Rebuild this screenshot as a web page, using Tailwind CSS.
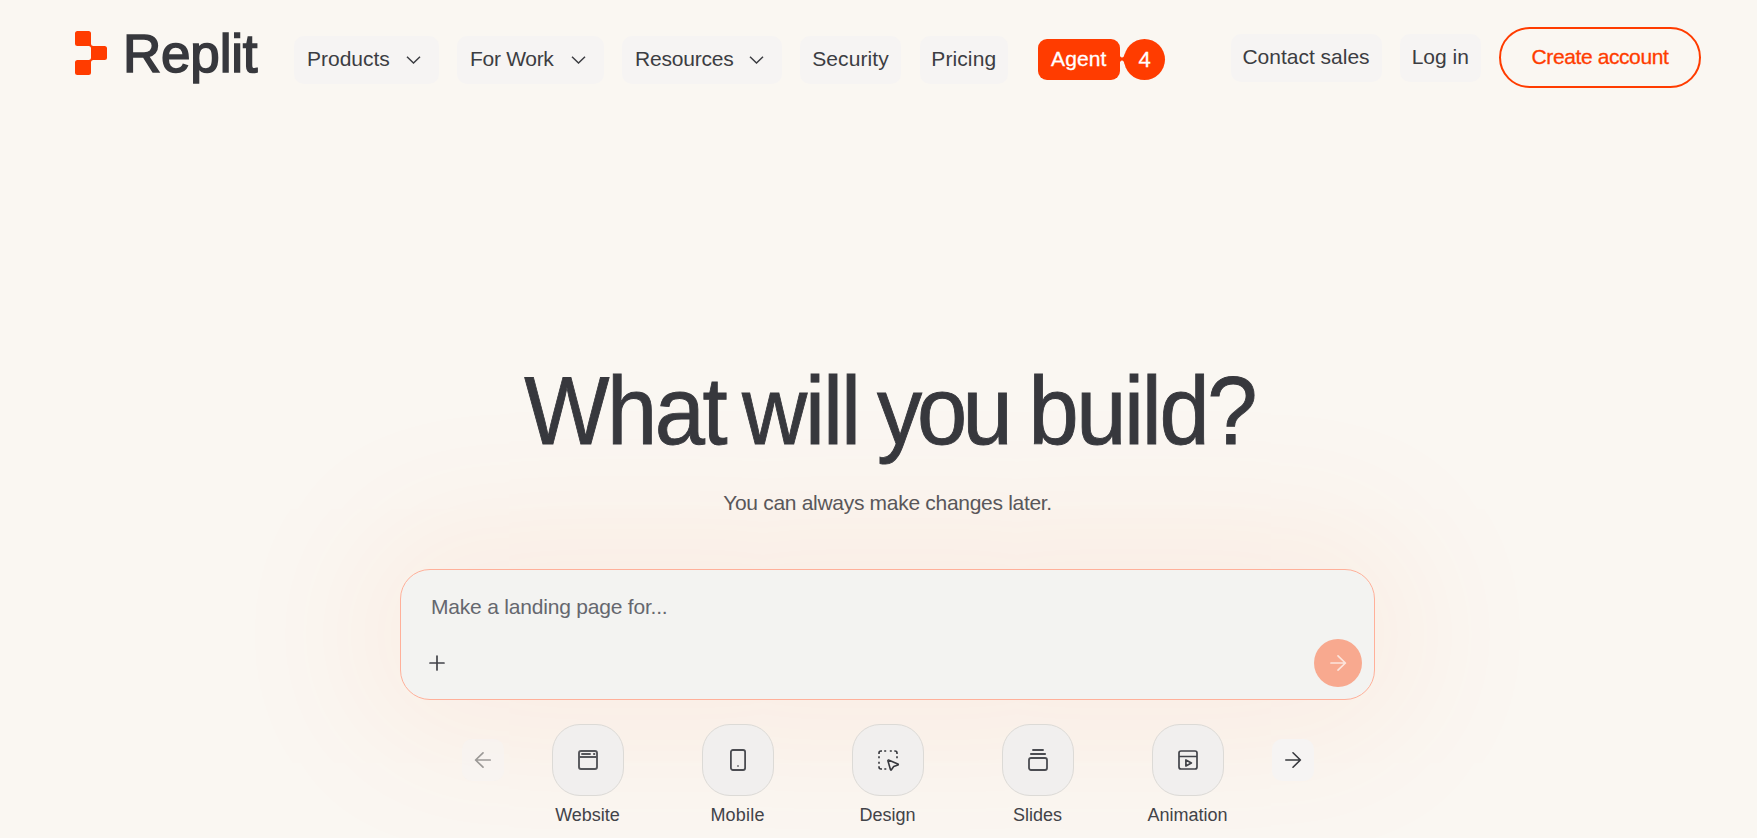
<!DOCTYPE html>
<html lang="en">
<head>
    <meta charset="UTF-8">
    <meta name="viewport" content="width=device-width, initial-scale=1.0">
    <title>Replit</title>
    <script src="https://cdn.jsdelivr.net/npm/@tailwindcss/browser@4"></script>
</head>
<body class="h-screen overflow-hidden bg-[#faf7f2] font-['Liberation_Sans',Arial,sans-serif] text-[#3c3d42]">
    <!-- Header -->
    <header class="flex h-[115px] items-start pl-[75px] pr-14 text-[21px]">
        <a href="#" class="flex w-[219px] shrink-0 items-start pt-[31px]">
            <svg class="h-11 w-8 shrink-0" viewBox="0 0 32 44" fill="#ff3c00">
                <path d="M2.5 0H13.5Q16 0 16 2.5V12.5Q16 15 18.5 15H29.5Q32 15 32 17.5V26.5Q32 29 29.5 29H18.5Q16 29 16 31.5V41.5Q16 44 13.5 44H2.5Q0 44 0 41.5V31.5Q0 29 2.5 29H13.5Q16 29 16 26.5V17.5Q16 15 13.5 15H2.5Q0 15 0 12.5V2.5Q0 0 2.5 0Z"/>
            </svg>
            <span class="-mt-[9px] ml-4 text-[53px] leading-[63px] tracking-[-0.2px] text-[#37383d] [-webkit-text-stroke:1.6px_#37383d]">Replit</span>
        </a>
        <nav class="flex gap-[18.5px] pt-9 whitespace-nowrap">
            <a href="#" class="flex h-12 w-[144.5px] items-center justify-between rounded-[10px] bg-[#f6f4f3] pr-[17.5px] pb-0.5 pl-[13px]">
                <span>Products</span>
                <svg class="mt-0.5 h-2 w-[15px]" viewBox="0 0 15 8" fill="none" stroke="currentColor" stroke-width="1.5"><path d="M1 .8l6.5 6.2L14 .8"/></svg>
            </a>
            <a href="#" class="flex h-12 w-[146.5px] items-center justify-between rounded-[10px] bg-[#f6f4f3] pr-[17.5px] pb-0.5 pl-[13px]">
                <span class="tracking-[-0.3px]">For Work</span>
                <svg class="mt-0.5 h-2 w-[15px]" viewBox="0 0 15 8" fill="none" stroke="currentColor" stroke-width="1.5"><path d="M1 .8l6.5 6.2L14 .8"/></svg>
            </a>
            <a href="#" class="flex h-12 w-[159.5px] items-center justify-between rounded-[10px] bg-[#f6f4f3] pr-[17.5px] pb-0.5 pl-[13px]">
                <span class="tracking-[-0.2px]">Resources</span>
                <svg class="mt-0.5 h-2 w-[15px]" viewBox="0 0 15 8" fill="none" stroke="currentColor" stroke-width="1.5"><path d="M1 .8l6.5 6.2L14 .8"/></svg>
            </a>
            <a href="#" class="flex h-12 w-[101px] items-center justify-center rounded-[10px] bg-[#f6f4f3] pb-0.5 tracking-[0.1px]">Security</a>
            <a href="#" class="flex h-12 w-[88.5px] items-center justify-center rounded-[10px] bg-[#f6f4f3] pb-0.5 tracking-[0.1px]">Pricing</a>
            <a href="#" class="ml-[11px] flex h-[46px] items-center text-white">
                <span class="flex h-[41px] w-[82.5px] items-center justify-center rounded-[9px] bg-[#ff3c00] tracking-[0.1px] [-webkit-text-stroke:0.3px_white]">Agent</span>
                <svg class="-mx-px h-3 w-1.5" viewBox="0 0 6 12" fill="#ff3c00"><path d="M0 0Q1 4.5 3 4.5T6 0V12Q5 7.5 3 7.5T0 12Z"/></svg>
                <span class="flex size-[41px] items-center justify-center rounded-full bg-[#ff3c00] text-[22px] [-webkit-text-stroke:0.3px_white]">4</span>
            </a>
        </nav>
        <div class="ml-auto flex items-center gap-[18px] pt-[27px] whitespace-nowrap">
            <a href="#" class="flex h-12 w-[151px] items-center justify-center rounded-[10px] bg-[#f6f4f3] pb-px">Contact sales</a>
            <a href="#" class="flex h-12 w-[81.5px] items-center justify-center rounded-[10px] bg-[#f6f4f3] pb-px">Log in</a>
            <a href="#" class="flex h-[61px] w-[202px] items-center justify-center rounded-full border-2 border-[#ff3c00] pb-0.5 tracking-[-0.4px] text-[#ff3c00] [-webkit-text-stroke:0.3px_#ff3c00]">Create account</a>
        </div>
    </header>

    <main class="flex flex-col items-center pl-[18px]">
        <!-- Hero -->
        <h1 class="mt-[240px] flex h-[112px] origin-center scale-x-94 justify-center pl-1 text-[96px] leading-[112px] whitespace-nowrap text-[#37383d] [-webkit-text-stroke:0.9px_#37383d]">
            <span class="tracking-[-2.6px]">What</span>
            <span class="ml-[18px] tracking-[-2.2px]">will</span>
            <span class="ml-[19px] tracking-[-5.2px]">you</span>
            <span class="ml-[22px] tracking-[-2.5px]">build?</span>
        </h1>
        <p class="mt-6 h-6 text-[21px] leading-6 tracking-[-0.3px] text-[#56575c]">You can always make changes later.</p>

        <!-- Prompt -->
        <div class="mt-[54px] flex h-[131px] w-[975px] flex-col justify-between rounded-[30px] border border-[#ffb09a] bg-[#f3f3f1] py-3 pr-3 pl-6 shadow-[0_0_160px_30px_rgba(255,90,20,0.08)]">
            <div class="h-9 pt-[13px] pl-1.5 text-[21px] leading-6 tracking-[-0.2px] text-[#65676e]">Make a landing page for...</div>
            <div class="flex items-center justify-between">
                <svg class="size-6" viewBox="0 0 24 24" fill="none" stroke="#424349" stroke-width="1.7" stroke-linecap="round"><path d="M12 5v14M5 12h14"/></svg>
                <button class="flex size-12 items-center justify-center rounded-full bg-[#f8a98f]">
                    <svg class="size-6" viewBox="0 0 24 24" fill="none" stroke="#fce5dd" stroke-width="1.7" stroke-linecap="round" stroke-linejoin="round"><path d="M5 12h14.4M12 4.8l7.4 7.2-7.4 7.2"/></svg>
                </button>
            </div>
        </div>

        <!-- Categories -->
        <div class="mt-6 flex items-start gap-12 text-[18px] leading-5 text-[#424348]">
            <button class="mt-[15px] flex size-[42px] items-center justify-center rounded-[10px] bg-[#f6f4f3]/50">
                <svg class="size-6" viewBox="0 0 24 24" fill="none" stroke="#9c9997" stroke-width="1.7" stroke-linecap="round" stroke-linejoin="round"><path d="M19.2 12H4.6M12 4.8L4.6 12l7.4 7.2"/></svg>
            </button>
            <div class="flex gap-[78px]">
                <div class="flex w-[72px] flex-col items-center gap-[9px]">
                    <div class="flex size-[72px] items-center justify-center rounded-[28px] border border-[#dcdad6] bg-[#f1efee]">
                        <svg class="size-6" viewBox="0 0 24 24" fill="none" stroke="#55565a" stroke-width="1.9"><rect x="3" y="3" width="18" height="18" rx="2"/><path d="M3 9h18M5.3 6h9.4M17.2 6h2"/></svg>
                    </div>
                    <span>Website</span>
                </div>
                <div class="flex w-[72px] flex-col items-center gap-[9px]">
                    <div class="flex size-[72px] items-center justify-center rounded-[28px] border border-[#dcdad6] bg-[#f1efee]">
                        <svg class="size-6" viewBox="0 0 24 24" fill="none" stroke="#4b4c51" stroke-width="1.8"><rect x="4.9" y="2" width="14.2" height="20" rx="2"/><path d="M11.1 18h1.8" stroke="#8b8b8e"/></svg>
                    </div>
                    <span class="tracking-[0.2px]">Mobile</span>
                </div>
                <div class="flex w-[72px] flex-col items-center gap-[9px]">
                    <div class="flex size-[72px] items-center justify-center rounded-[28px] border border-[#dcdad6] bg-[#f1efee]">
                        <svg class="size-6 overflow-visible" viewBox="0 0 24 24" fill="none" stroke="#37383d" stroke-width="1.6" stroke-linejoin="round"><path d="M3 6V5q0-2 2-2h1M8.2 3h2M13.8 3h2M18.3 3H19q2 0 2 2v1M21 8.3v2M3 8.3v2M3 13.7v2M3 18.3V19q0 2 2 2h1M8.3 21h2"/><path d="M12.5 12.1q-.7-.1-.6.6l2.6 9q.4.8.9.1l2.3-3.3 4.2-1.5q.8-.5 0-1z"/></svg>
                    </div>
                    <span>Design</span>
                </div>
                <div class="flex w-[72px] flex-col items-center gap-[9px]">
                    <div class="flex size-[72px] items-center justify-center rounded-[28px] border border-[#dcdad6] bg-[#f1efee]">
                        <svg class="size-6" viewBox="0 0 24 24" fill="none" stroke="#4b4c51" stroke-width="1.8"><path d="M6.3 2h11.4M4.2 6h15.6"/><rect x="3" y="10" width="18" height="12" rx="2"/></svg>
                    </div>
                    <span>Slides</span>
                </div>
                <div class="flex w-[72px] flex-col items-center gap-[9px]">
                    <div class="flex size-[72px] items-center justify-center rounded-[28px] border border-[#dcdad6] bg-[#f1efee]">
                        <svg class="size-6" viewBox="0 0 24 24" fill="none" stroke="#424349" stroke-width="1.7" stroke-linejoin="round"><rect x="3" y="3" width="18" height="18" rx="2"/><path d="M3 8.5h18M9.9 12v6l5.5-3z"/></svg>
                    </div>
                    <span>Animation</span>
                </div>
            </div>
            <button class="mt-[15px] flex size-[42px] items-center justify-center rounded-[10px] bg-[#f6f4f3]">
                <svg class="size-6" viewBox="0 0 24 24" fill="none" stroke="#37383d" stroke-width="1.6" stroke-linecap="round" stroke-linejoin="round"><path d="M4.8 12h14.6M12 4.8l7.4 7.2-7.4 7.2"/></svg>
            </button>
        </div>
    </main>
</body>
</html>
